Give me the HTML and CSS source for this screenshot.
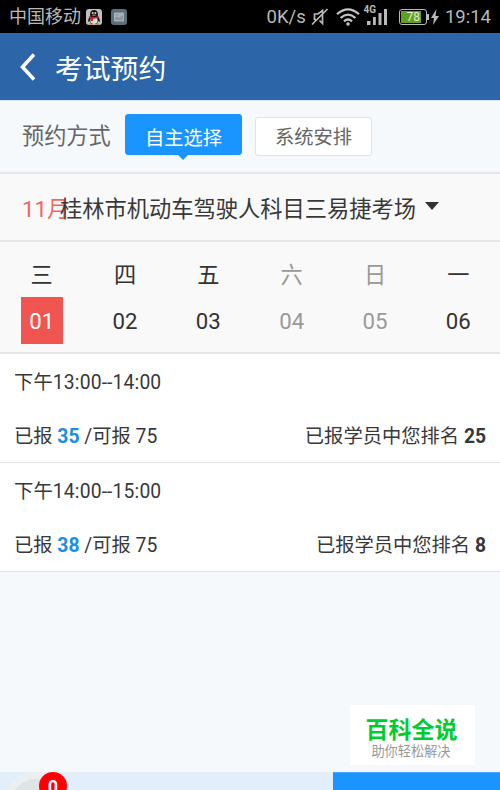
FILE: index.html
```html
<!DOCTYPE html>
<html lang="zh-CN">
<head>
<meta charset="utf-8">
<title>考试预约</title>
<link rel="stylesheet" href="styles.css">
</head>
<body>
<div class="status">
  <span class="carrier">中国移动</span>
  <svg class="qq" width="16" height="16" viewBox="0 0 16 16"><rect width="16" height="16" rx="3" fill="#bfc1c1"/><path d="M4 7Q2 10 2 13l2-1 1 3h6l1-3 2 1q0-3-2-6z" fill="#151515"/><ellipse cx="8" cy="11.3" rx="3.6" ry="3.8" fill="#ddd"/><path d="M4 6Q4 1 8 1t4 5q0 2-4 2T4 6z" fill="#151515"/><circle cx="6.7" cy="4" r="1" fill="#ccc"/><circle cx="9.3" cy="4" r="1" fill="#ccc"/><path d="M5.500 6q2.500-1 5 0-2.500 1.500-5 0z" fill="#dc9d20"/><path d="M3.500 7q4.500 2 9 0v2q-3 1-5.500.8V12H5V9.500L3.500 9z" fill="#ce2024"/><path d="M3 14.500h4v1.300H3zm6 0h4v1.300H9z" fill="#bd8721"/></svg>
  <svg class="photo" width="16" height="16" viewBox="0 0 16 16"><rect width="16" height="16" rx="3" fill="#5e6f7c"/><rect x="3" y="3.500" width="10" height="9" rx="1" fill="#a9b1b6"/><path d="M4 11V9l2-1.500 2 1.500L12 6v5z" fill="#8b979f"/><circle cx="6" cy="5.800" r="1" fill="#8b979f"/></svg>
  <span class="speed">0K/s</span>
  <svg class="mute" width="18" height="18" viewBox="0 0 18 18" fill="none" stroke="#b9b9b9" stroke-width="1.700"><path d="M5 11.500H3.500V6H7l4.500-3.500V15.500L8.500 12.500M1 16.500 16.500 1"/></svg>
  <svg class="wifi" width="24" height="18" viewBox="0 0 24 18" fill="none" stroke="#c4c4c4" stroke-width="2.300"><path d="M1 6.200Q12-3.500 23 6.200M4.500 10Q12 3.300 19.500 10M8 13.300Q12 9.800 16 13.300"/><circle cx="12" cy="16" r="1.800" fill="#c4c4c4" stroke="none"/></svg>
  <span class="signal"><span class="net">4G</span><svg width="21" height="18" viewBox="0 0 21 18" fill="#b9b9b9"><path d="M0 13h3.500V17H0zm6-4h2.800V17H6zm5.500-4h3V17h-3zM17 1h3V17h-3z"/></svg></span>
  <span class="battery"><span class="charge">78</span></span>
  <svg class="bolt" width="8" height="16" viewBox="0 0 8 16"><path d="M5.500 0 0 9h3L2 16l6-9H4.500z" fill="#b9b9b9"/></svg>
  <span class="clock">19:14</span>
</div>
<header class="header">
  <svg class="back" width="18" height="28" viewBox="0 0 18 28" fill="none" stroke="#fff" stroke-width="3.500"><path d="M15 1.500 3.500 14l11.500 12.500"/></svg>
  <h1>考试预约</h1>
</header>
<section class="mode">
  <span class="mode-label">预约方式</span>
  <span class="tab active">自主选择</span>
  <span class="tab">系统安排</span>
</section>
<section class="place">
  <span class="month">11月</span><span class="venue">桂林市机动车驾驶人科目三易捷考场</span><span class="caret"></span>
</section>
<section class="calendar">
  <div class="day selected"><span>三</span><b>01</b></div>
  <div class="day"><span>四</span><b>02</b></div>
  <div class="day"><span>五</span><b>03</b></div>
  <div class="day off"><span>六</span><b>04</b></div>
  <div class="day off"><span>日</span><b>05</b></div>
  <div class="day"><span>一</span><b>06</b></div>
</section>
<section class="slot">
  <div class="time">下午13:00--14:00</div>
  <div class="counts"><span>已报 <b class="taken">35</b> /可报 75</span><span>已报学员中您排名 <b>25</b></span></div>
</section>
<section class="slot">
  <div class="time">下午14:00--15:00</div>
  <div class="counts"><span>已报 <b class="taken">38</b> /可报 75</span><span>已报学员中您排名 <b>8</b></span></div>
</section>
<footer class="bottom">
  <div class="tray"><span class="disc"></span><span class="badge">0</span></div>
  <div class="submit"></div>
</footer>
<aside class="brand"><strong>百科全说</strong><span>助你轻松解决</span></aside>
</body>
</html>
```
FILE: styles.css
```css
* { box-sizing: border-box; }
body {
  margin: 0;
  width: 500px;
  height: 790px;
  overflow: hidden;
  position: relative;
  display: flex;
  flex-direction: column;
  background: #f5f9fb;
  color: #383838;
  font-family: Roboto, "Noto Sans CJK SC", sans-serif;
}
body > * { flex-shrink: 0; }
svg { display: block; flex: none; }
.status {
  height: 33px;
  background: #000;
  color: #b9b9b9;
  display: flex;
  align-items: center;
  padding: 1px 9px 0 9px;
  white-space: nowrap;
}
.carrier { width: 79px; font-size: 18px; line-height: 30px; padding-bottom: 1px; }
.photo { margin-left: 9px; }
.speed { margin-left: 140px; width: 38px; font-size: 18.500px; }
.mute { margin-left: 6px; }
.wifi { margin-left: 7px; }
.signal { position: relative; margin-left: 7px; }
.net { position: absolute; left: -3px; top: -4px; font: bold 10px/11px Roboto, sans-serif; }
.battery {
  position: relative;
  width: 29px;
  height: 16px;
  margin-left: 11px;
  border: 1px solid #b9b9b9;
  border-radius: 3px;
  padding: 1px 5px 1px 1px;
}
.battery::after {
  content: "";
  position: absolute;
  right: -3px;
  top: 4px;
  width: 2px;
  height: 6px;
  background: #b9b9b9;
}
.charge {
  display: block;
  height: 12px;
  background: #62a120;
  color: #e4ebdc;
  font-size: 12px;
  line-height: 13px;
  text-align: right;
  padding-right: 1px;
}
.bolt { margin-left: 4px; }
.clock { margin-left: 6px; font-size: 18.500px; }
.header {
  height: 67px;
  background: #2c66a9;
  color: #fff;
  display: flex;
  align-items: center;
  padding-left: 19px;
}
.header h1 { margin: 6px 0 0 18px; font-size: 27.800px; font-weight: 400; line-height: 40px; }
.mode {
  height: 74px;
  border-top: 1px solid #d9e5f0;
  border-bottom: 2px solid #e6e7e8;
  display: flex;
  align-items: center;
  padding-left: 22px;
  color: #666;
}
.mode-label { width: 103px; font-size: 22.200px; line-height: 32px; padding-bottom: 2px; }
.tab {
  width: 117px;
  height: 39px;
  border: 1px solid #d7e6f1;
  border-radius: 3px;
  background: #fff;
  font-size: 19.300px;
  line-height: 40px;
  text-align: center;
}
.tab.active {
  position: relative;
  height: 41px;
  margin: 0 13px 5px 0;
  background: #1a94ff;
  border-color: #1a94ff;
  color: #fff;
  line-height: 47px;
}
.tab.active::after {
  content: "";
  position: absolute;
  left: 51px;
  bottom: -6px;
  border: solid transparent;
  border-width: 6px 6px 0;
  border-top-color: #1a94ff;
}
.place {
  height: 68px;
  background: #f9f9f9;
  border-bottom: 2px solid #e7e7e7;
  display: flex;
  align-items: center;
  padding-left: 22px;
  font-size: 22.250px;
  white-space: nowrap;
}
.month { width: 38px; color: #f06762; }
.caret { margin: -3px 0 0 9px; border: solid transparent; border-width: 8px 7px 0; border-top-color: #333; }
.calendar {
  height: 112px;
  background: #f9f9f9;
  border-bottom: 2px solid #e5e5e5;
  display: grid;
  grid-template-columns: repeat(6, 1fr);
  padding-top: 10px;
}
.day {
  display: flex;
  flex-direction: column;
  align-items: center;
  font-size: 22.200px;
  color: #333;
}
.day span { height: 45px; line-height: 46px; }
.day b { width: 42px; height: 47px; line-height: 49px; text-align: center; font-weight: 400; }
.selected b { background: #f05551; color: #fff; }
.day.off { color: #999; }
.slot {
  height: 109px;
  background: #fff;
  border-bottom: 1px solid #e2e4e5;
  padding: 15px 14px 0;
  font-size: 19.300px;
  line-height: 28px;
}
.time { letter-spacing: 0.150px; }
.counts { display: flex; justify-content: space-between; margin-top: 26px; }
.taken { color: #1a8de8; }
.bottom { height: 18px; margin-top: auto; display: flex; overflow: hidden; }
.tray { position: relative; width: 333px; background: #e2eefa; overflow: hidden; }
.disc {
  position: absolute;
  left: 4px;
  top: 0;
  width: 64px;
  height: 64px;
  border: 7px solid #ebeff0;
  border-radius: 50%;
  background: #dfe5e6;
}
.badge {
  position: absolute;
  left: 39px;
  top: 0;
  width: 28px;
  height: 28px;
  border-radius: 50%;
  background: #f00;
  color: #fff;
  font: bold 18px/29px Roboto, sans-serif;
  text-align: center;
}
.submit { flex: 1; background: #1a94ff; border-top: 1px solid #48a7f8; }
.brand {
  position: absolute;
  left: 350px;
  top: 705px;
  width: 125px;
  height: 60px;
  background: #fff;
  display: flex;
  flex-direction: column;
  align-items: center;
  padding-top: 11px;
}
.brand strong { font-size: 23px; line-height: 29px; font-weight: 700; color: #00cc32; margin-right: 2px; }
.brand span { font-size: 13.200px; line-height: 14px; color: #999; margin-right: 3px; }
```
